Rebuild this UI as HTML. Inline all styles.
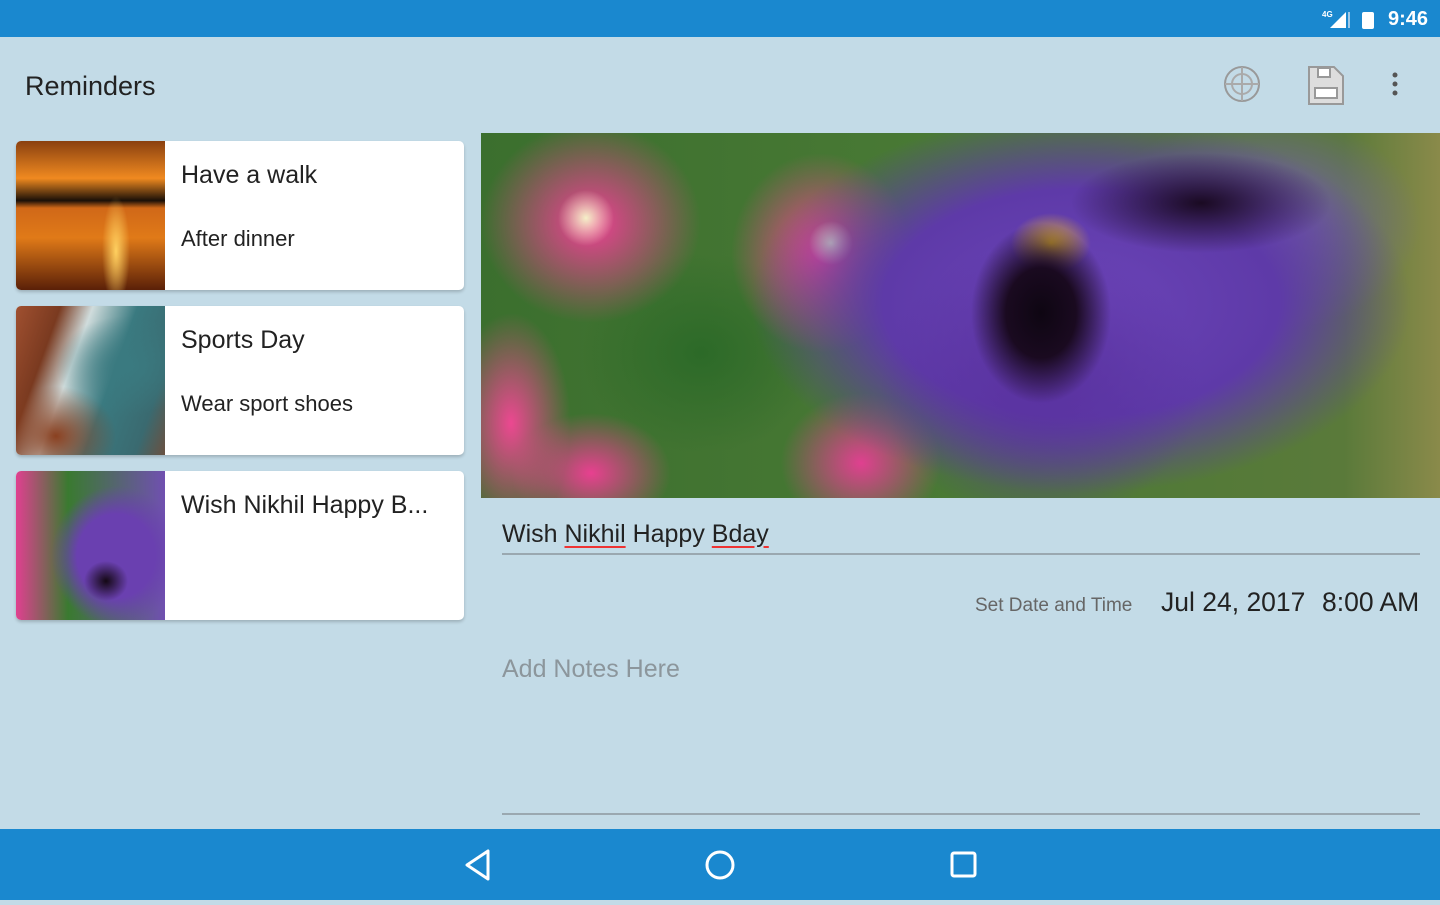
<!DOCTYPE html>
<html><head><meta charset="utf-8"><style>
*{margin:0;padding:0;box-sizing:border-box}
body{width:1440px;height:900px;overflow:hidden;background:#c3dbe7;font-family:"Liberation Sans",sans-serif;position:relative}
.status{position:absolute;left:0;top:0;width:1440px;height:37px;background:#1a88cf}
.time{position:absolute;right:12px;top:8px;color:#fff;font-size:20px;font-weight:bold}
.title{position:absolute;left:25px;top:71px;font-size:27px;color:#222}
.card{position:absolute;left:16px;width:448px;height:149px;background:#fff;border-radius:5px;box-shadow:0 2px 3px rgba(0,0,0,.2);overflow:hidden}
.thumb{position:absolute;left:0;top:0;width:149px;height:149px}
.t1{position:absolute;left:165px;top:20px;font-size:25px;color:#222}
.t2{position:absolute;left:165px;top:85px;font-size:22px;color:#222}
.hero{position:absolute;left:481px;top:133px;width:959px;height:365px;overflow:hidden;
background:
radial-gradient(ellipse 70px 90px at 560px 180px,#0e0612 0,#1a0a20 50%,transparent 100%),
radial-gradient(ellipse 130px 50px at 720px 70px,#1a0a22,transparent),
radial-gradient(ellipse 40px 30px at 570px 110px,#e0b030,transparent),
radial-gradient(ellipse 160px 140px at 560px 250px,#5a32a0,transparent),
radial-gradient(ellipse 330px 190px at 600px 170px,#6b44b8 0,#5e3aa8 60%,transparent 100%),
radial-gradient(ellipse 160px 110px at 780px 90px,#7a5ac0,transparent),
radial-gradient(circle 28px at 105px 85px,#f4f0c8,transparent),
radial-gradient(ellipse 110px 100px at 110px 90px,#ef3f95,transparent),
radial-gradient(circle 22px at 350px 110px,#e8f0c0,transparent),
radial-gradient(ellipse 90px 100px at 340px 120px,#ee4592,transparent),
radial-gradient(ellipse 60px 110px at 30px 290px,#ec4891,transparent),
radial-gradient(ellipse 80px 60px at 110px 340px,#e84090,transparent),
radial-gradient(ellipse 80px 70px at 380px 330px,#e04090,transparent),
radial-gradient(ellipse 120px 100px at 220px 220px,#2c6a28,transparent),
linear-gradient(90deg,#3b6f2e,#4a7a35 50%,#5a7a3a 90%,#8a8a4a)}
.name{position:absolute;left:502px;top:520px;font-size:25px;color:#222}
.u{text-decoration:underline;text-decoration-color:#e33;text-underline-offset:4px}
.line{position:absolute;left:502px;width:918px;height:2px;background:#9aa8b0}
.sdt{position:absolute;left:975px;top:595px;font-size:19px;color:#666}
.date{position:absolute;top:587px;font-size:26.5px;color:#222}
.notes{position:absolute;left:502px;top:655px;font-size:25px;color:#8c969c}
.nav{position:absolute;left:0;top:829px;width:1440px;height:71px;background:#1a88cf}
</style></head><body>
<div class="status"><svg style="position:absolute;left:1322px;top:8px" width="60" height="22"><text x="0" y="9" font-size="8" fill="#fff" font-family="Liberation Sans" font-weight="bold">4G</text><polygon points="8,20 24,20 24,4" fill="#fff"/><rect x="26" y="4" width="2" height="16" fill="#9fc9e8"/><rect x="40" y="4" width="12" height="17" rx="2" fill="#fff"/></svg><div class="time">9:46</div></div>
<div class="title">Reminders</div>
<svg style="position:absolute;left:1222px;top:64px" width="42" height="42"><circle cx="20" cy="20" r="17" fill="none" stroke="#999" stroke-width="2"/><circle cx="20" cy="20" r="10" fill="none" stroke="#aaa" stroke-width="2"/><path d="M3 20H37M20 3V37" stroke="#aaa" stroke-width="2"/></svg>
<svg style="position:absolute;left:1306px;top:64px" width="40" height="42"><path d="M3 3H28L37 12V40H3Z" fill="#ddd" stroke="#999" stroke-width="2"/><rect x="12" y="4" width="12" height="9" fill="#fff" stroke="#999" stroke-width="2"/><rect x="9" y="24" width="22" height="10" fill="#fff" stroke="#999" stroke-width="2"/></svg>
<svg style="position:absolute;left:1390px;top:72px" width="10" height="26"><circle cx="5" cy="3" r="2.5" fill="#555"/><circle cx="5" cy="12" r="2.5" fill="#555"/><circle cx="5" cy="21" r="2.5" fill="#555"/></svg>

<div class="card" style="top:141px"><div class="thumb" style="background:radial-gradient(ellipse 14px 55px at 100px 110px,#ffd060,transparent),linear-gradient(180deg,#8a4010 0,#f08a20 25%,#1a1008 40%,#d06818 45%,#e07a18 65%,#5a2008 100%)"></div><div class="t1">Have a walk</div><div class="t2">After dinner</div></div>
<div class="card" style="top:306px"><div class="thumb" style="background:radial-gradient(ellipse 70px 50px at 110px 60px,#3a7a80,transparent),radial-gradient(ellipse 60px 50px at 40px 130px,#8a4020,transparent),linear-gradient(110deg,#a05030 0,#7a3a20 22%,#d0dcdc 38%,#3a7a80 60%,#3a6a70 85%,#6a5040 100%)"></div><div class="t1">Sports Day</div><div class="t2">Wear sport shoes</div></div>
<div class="card" style="top:471px"><div class="thumb" style="background:radial-gradient(ellipse 22px 20px at 90px 110px,#140814,transparent),radial-gradient(ellipse 65px 70px at 100px 85px,#6a40b0 60%,transparent),linear-gradient(90deg,#e04090,#3a7a30 35%,#7050b0)"></div><div class="t1">Wish Nikhil Happy B...</div></div>

<div class="hero"></div>
<div class="name">Wish <span class="u">Nikhil</span> Happy <span class="u">Bday</span></div>
<div class="line" style="top:553px"></div>
<div class="sdt">Set Date and Time</div>
<div class="date" style="left:1161px">Jul 24, 2017</div>
<div class="date" style="left:1322px">8:00 AM</div>
<div class="notes">Add Notes Here</div>
<div class="line" style="top:813px"></div>
<div class="nav"><svg width="1440" height="71"><polygon points="488,22 488,50 467,36" fill="none" stroke="#fff" stroke-width="3" stroke-linejoin="round"/><circle cx="720" cy="36" r="13" fill="none" stroke="#fff" stroke-width="3"/><rect x="952" y="24" width="23" height="23" rx="2" fill="none" stroke="#fff" stroke-width="3"/></svg></div>
</body></html>
